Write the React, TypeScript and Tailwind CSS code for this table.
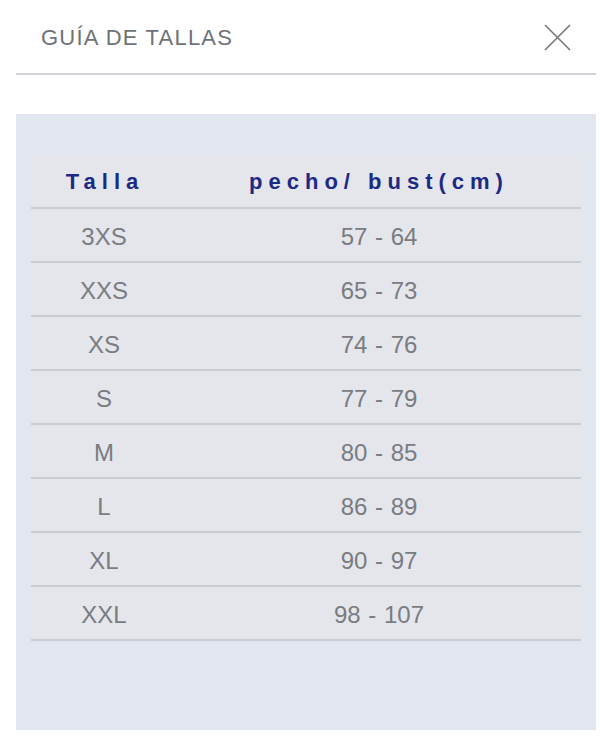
import React from 'react';

const sizes = [
  { talla: '3XS', bust: '57 - 64' },
  { talla: 'XXS', bust: '65 - 73' },
  { talla: 'XS', bust: '74 - 76' },
  { talla: 'S', bust: '77 - 79' },
  { talla: 'M', bust: '80 - 85' },
  { talla: 'L', bust: '86 - 89' },
  { talla: 'XL', bust: '90 - 97' },
  { talla: 'XXL', bust: '98 - 107' },
];

export default function App() {
  return (
    <div
      className="w-[600px] h-[740px] bg-white"
      style={{ fontFamily: '"Liberation Sans", Arial, sans-serif' }}
    >
      {/* header */}
      <div className="ml-4 mr-1 h-[75px] flex items-center justify-between border-b-2 border-[#cfd3d8]">
        <h2 className="pl-[25px] pt-[1px] text-[22px] tracking-[1.2px] text-[#6e7277] uppercase">
          Guía de Tallas
        </h2>
        <button className="mr-[25px] mt-[1px] w-[27px] h-[27px] text-[#74777c]" aria-label="Cerrar">
          <svg viewBox="0 0 27 27" width="27" height="27" fill="none" stroke="currentColor" strokeWidth="1.6">
            <path d="M1 1 L26 26 M26 1 L1 26" />
          </svg>
        </button>
      </div>

      {/* panel */}
      <div className="ml-4 mr-1 mt-[39px] h-[616px] bg-[#e2e6ef] px-[15px] pt-[41px]">
        <div className="bg-[#e4e6ec]">
          <div className="h-[54px] flex items-center border-b-2 border-[#c9ccd3] font-bold text-[22px] tracking-[6px] text-[#1c2a86]">
            <div className="w-[146px] pl-[2px] text-center">Talla</div>
            <div className="flex-1 text-center">pecho/ bust(cm)</div>
          </div>
          {sizes.map((s) => (
            <div
              key={s.talla}
              className="h-[54px] pt-[3px] flex items-center border-b-2 border-[#c9ccd3] text-[24px] text-[#797c81]"
            >
              <div className="w-[146px] text-center">{s.talla}</div>
              <div className="flex-1 text-center [word-spacing:1px]">{s.bust}</div>
            </div>
          ))}
        </div>
      </div>
    </div>
  );
}
